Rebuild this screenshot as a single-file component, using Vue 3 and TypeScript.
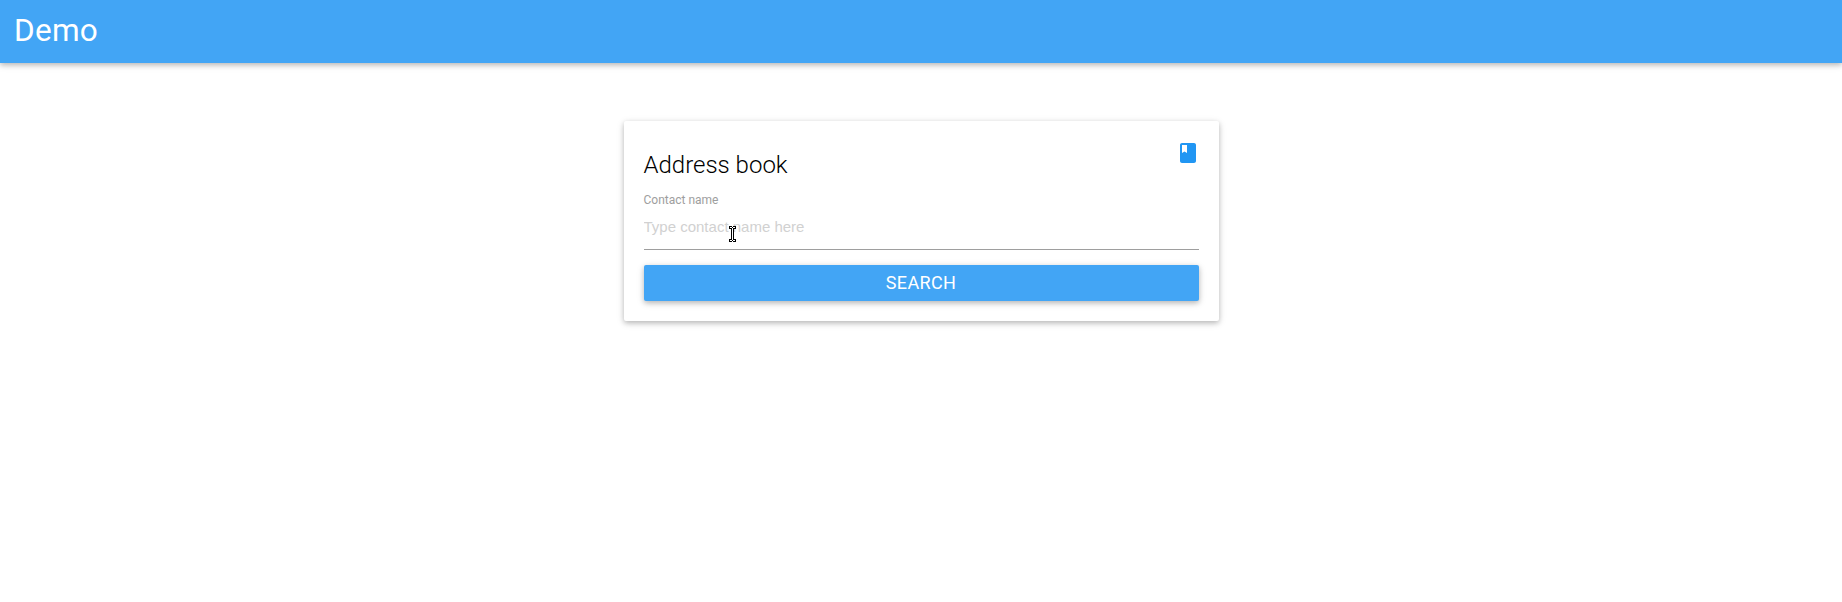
<script setup lang="ts">
import { ref } from 'vue'

const contactName = ref('')
</script>

<template>
  <div class="page">
    <header class="navbar">
      <a class="brand">Demo</a>
    </header>
    <main class="content">
      <form class="card" @submit.prevent>
        <svg class="book" viewBox="0 0 24 24" aria-hidden="true">
          <path d="M18 2H6c-1.1 0-2 .9-2 2v16c0 1.1.9 2 2 2h12c1.1 0 2-.9 2-2V4c0-1.1-.9-2-2-2zM6 4h5v8l-2.5-1.5L6 12V4z" />
        </svg>
        <h1 class="title">Address book</h1>
        <label class="label" for="contact">Contact name</label>
        <input id="contact" v-model="contactName" class="field" type="text" placeholder="Type contact name here" />
        <button class="search" type="submit">SEARCH</button>
        <svg class="cursor" viewBox="0 0 7 16" aria-hidden="true">
          <path class="outline" d="M0 0H3V1H4V0H7V3H5V13H7V16H4V15H3V16H0V13H2V3H0Z" />
          <path class="core" d="M1 1H3V2H4V1H6V2H4V14H6V15H4V14H3V15H1V14H3V2H1Z" />
        </svg>
      </form>
    </main>
  </div>
</template>

<style>
body {
  margin: 0;
  background: #fff;
}
</style>

<style scoped>
.page {
  height: 602px;
  overflow: hidden;
  font-family: Roboto, sans-serif;
}
.navbar {
  height: 63px;
  padding-left: 14px;
  background: #42a5f5;
  box-shadow: 0 2px 5px rgba(0, 0, 0, 0.2), 0 2px 8px rgba(0, 0, 0, 0.12);
}
.brand {
  color: #fff;
  font-size: 31.5px;
  line-height: 62px;
  letter-spacing: 0.25px;
}
.content {
  display: flex;
  justify-content: center;
  padding-top: 58px;
}
.card {
  position: relative;
  box-sizing: border-box;
  display: flex;
  flex-direction: column;
  width: 595px;
  height: 200px;
  padding: 20px;
  border-radius: 2px;
  background: #fff;
  box-shadow: 0 2px 5px rgba(0, 0, 0, 0.2), 0 2px 8px rgba(0, 0, 0, 0.12);
}
.book {
  position: absolute;
  top: 20px;
  right: 19px;
  width: 24px;
  height: 24px;
  fill: #2196f3;
}
.title {
  margin: 8px 0 0;
  font-size: 24px;
  font-weight: 300;
  line-height: 32px;
  color: #000;
}
.label {
  margin-top: 11px;
  font-size: 12px;
  line-height: 16px;
  color: #9e9e9e;
}
.field {
  box-sizing: border-box;
  width: 100%;
  height: 42px;
  margin: 0;
  padding: 0 0 4px;
  border: 0;
  border-bottom: 1px solid #9e9e9e;
  outline: 0;
  background: transparent;
  font: 15px "Liberation Sans", Arial, sans-serif;
  color: #000;
}
.field::placeholder {
  color: #d1d1d1;
  opacity: 1;
}
.search {
  height: 36px;
  margin: 15px 0 0;
  padding: 0;
  border: 0;
  border-radius: 2px;
  background: #42a5f5;
  box-shadow: 0 2px 5px rgba(0, 0, 0, 0.2), 0 2px 8px rgba(0, 0, 0, 0.12);
  color: #fff;
  font: 400 18px/36px Roboto, sans-serif;
  letter-spacing: 0.35px;
}
.cursor {
  position: absolute;
  left: 105.5px;
  top: 105px;
  width: 7px;
  height: 16px;
  shape-rendering: crispEdges;
}
.outline {
  fill: #000;
}
.core {
  fill: #fff;
}
</style>
